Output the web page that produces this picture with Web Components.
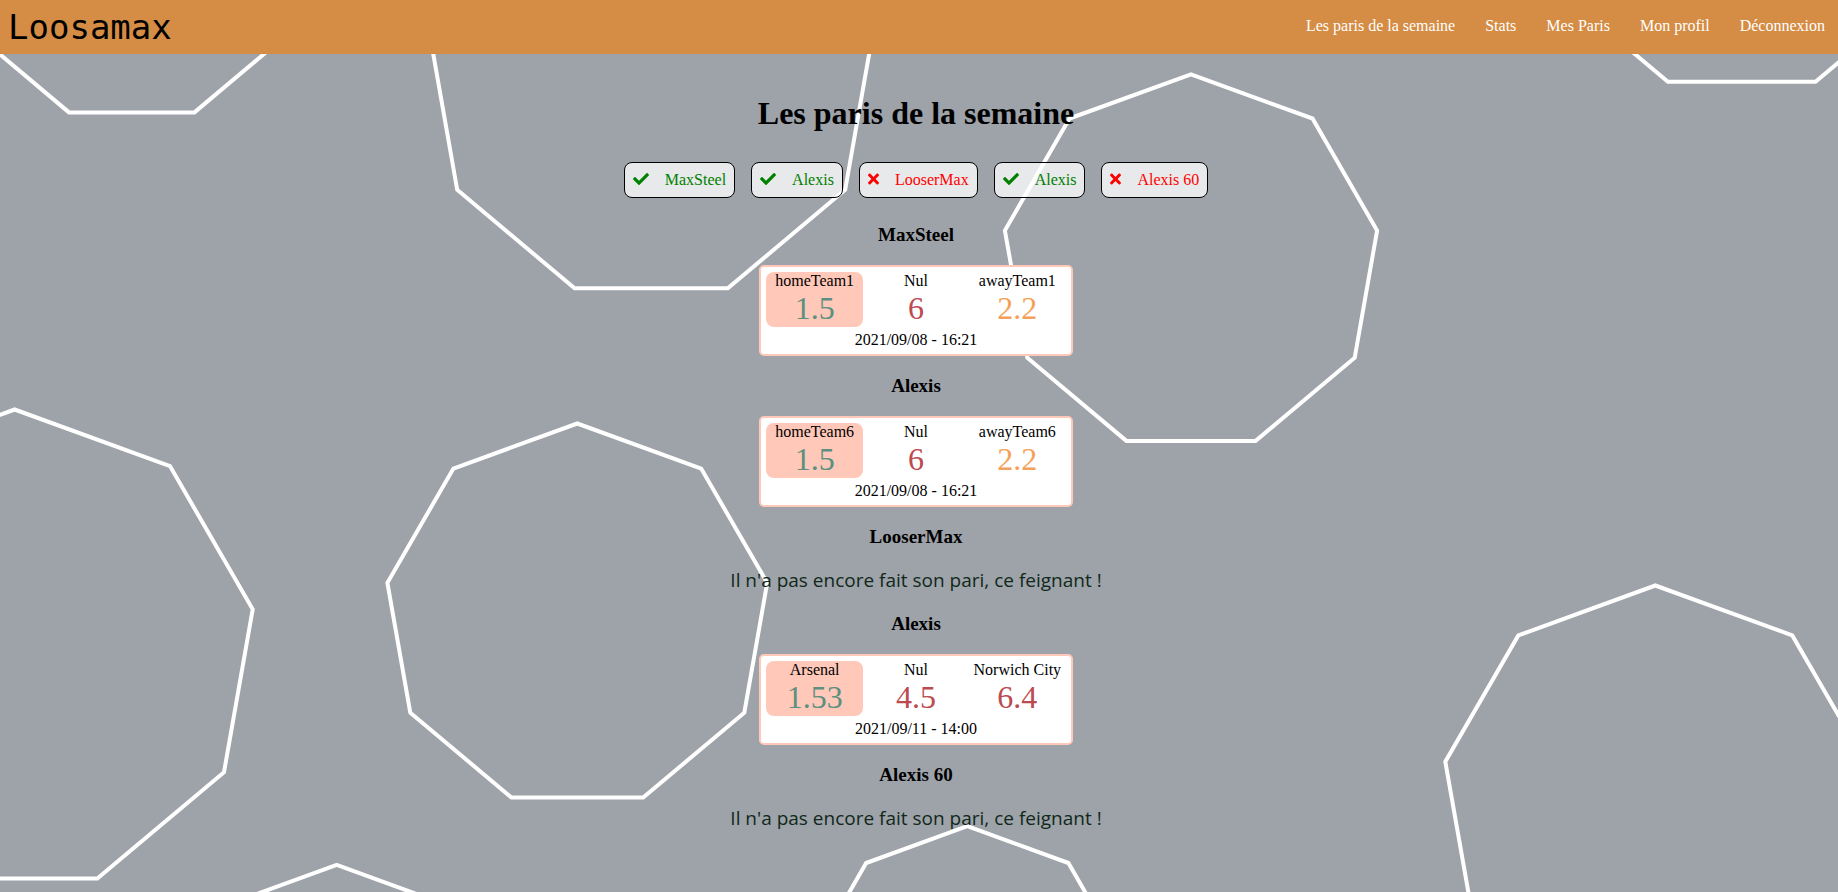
<!DOCTYPE html>
<html lang="fr">
<head>
<meta charset="utf-8">
<meta name="viewport" content="width=device-width, initial-scale=1">
<title>Loosamax</title>
<style>
  body { margin: 0; background: #9ea2a9; color: #000; font: 16px/18px "Liberation Serif", serif; }
</style>
</head>
<body>
<loosa-app></loosa-app>

<template id="app">
  <style>
    :host { display: block; position: relative; min-height: 100vh; overflow: hidden; box-sizing: border-box; }
    loosa-backdrop { position: absolute; inset: 0; }
    .page { position: relative; }
    main { display: flex; flex-direction: column; align-items: center; padding: 41px 6px 32px 0; }
    h1 { margin: 0 0 30px; font-size: 32px; line-height: 37px; text-align: center; }
    .players { display: flex; flex-wrap: wrap; justify-content: center; gap: 16px; margin: 0 0 7px; }
  </style>
  <loosa-backdrop></loosa-backdrop>
  <div class="page">
    <loosa-header>
      <loosa-link>Les paris de la semaine</loosa-link>
      <loosa-link>Stats</loosa-link>
      <loosa-link>Mes Paris</loosa-link>
      <loosa-link>Mon profil</loosa-link>
      <loosa-link>Déconnexion</loosa-link>
    </loosa-header>
    <main>
      <h1>Les paris de la semaine</h1>
      <div class="players">
        <player-chip done>MaxSteel</player-chip>
        <player-chip done>Alexis</player-chip>
        <player-chip>LooserMax</player-chip>
        <player-chip done>Alexis</player-chip>
        <player-chip>Alexis 60</player-chip>
      </div>
      <player-bet name="MaxSteel">
        <bet-card date="2021/09/08 - 16:21">
          <bet-odd label="homeTeam1" value="1.5" level="low" picked></bet-odd>
          <bet-odd label="Nul" value="6" level="high"></bet-odd>
          <bet-odd label="awayTeam1" value="2.2" level="mid"></bet-odd>
        </bet-card>
      </player-bet>
      <player-bet name="Alexis">
        <bet-card date="2021/09/08 - 16:21">
          <bet-odd label="homeTeam6" value="1.5" level="low" picked></bet-odd>
          <bet-odd label="Nul" value="6" level="high"></bet-odd>
          <bet-odd label="awayTeam6" value="2.2" level="mid"></bet-odd>
        </bet-card>
      </player-bet>
      <player-bet name="LooserMax"></player-bet>
      <player-bet name="Alexis">
        <bet-card date="2021/09/11 - 14:00">
          <bet-odd label="Arsenal" value="1.53" level="low" picked></bet-odd>
          <bet-odd label="Nul" value="4.5" level="high"></bet-odd>
          <bet-odd label="Norwich City" value="6.4" level="high"></bet-odd>
        </bet-card>
      </player-bet>
      <player-bet name="Alexis 60"></player-bet>
    </main>
  </div>
</template>

<template id="header">
  <style>
    :host { display: block; background: #d58c44; }
    header { display: flex; flex-wrap: wrap; align-items: center; justify-content: space-between; min-height: 54px; padding: 0 13px 0 8px; box-sizing: border-box; }
    .logo { color: #000; text-decoration: none; font: 34px/40px "DejaVu Sans Mono", monospace; }
    nav { display: flex; flex-wrap: wrap; gap: 30px; padding-bottom: 2px; }
  </style>
  <header>
    <a class="logo" href="#">Loosamax</a>
    <nav><slot></slot></nav>
  </header>
</template>

<template id="link">
  <style>
    :host { display: block; }
    a { color: #fff; text-decoration: none; }
  </style>
  <a href="#"><slot></slot></a>
</template>

<template id="chip">
  <style>
    :host { display: flex; align-items: center; gap: 16px; padding: 8px; border: 1px solid #000; border-radius: 8px; background: rgba(255, 255, 255, .76); color: red; }
    :host([done]) { color: green; }
    svg { display: block; height: 16px; fill: currentColor; margin-bottom: 2px; }
    .yes, :host([done]) .no { display: none; }
    :host([done]) .yes { display: block; }
  </style>
  <svg class="yes" width="16" viewBox="0 0 512 512" aria-hidden="true"><path d="M173.898 439.404l-166.4-166.4c-9.997-9.997-9.997-26.206 0-36.204l36.203-36.204c9.997-9.998 26.207-9.998 36.204 0L192 312.69 432.095 72.596c9.997-9.997 26.207-9.997 36.204 0l36.203 36.204c9.997 9.997 9.997 26.206 0 36.204l-294.4 294.401c-9.998 9.997-26.207 9.997-36.204-.001z"/></svg>
  <svg class="no" width="11" viewBox="0 0 352 512" aria-hidden="true"><path d="M242.72 256l100.07-100.07c12.28-12.28 12.28-32.19 0-44.48l-22.24-22.24c-12.28-12.28-32.19-12.28-44.48 0L176 189.28 75.93 89.21c-12.28-12.28-32.19-12.28-44.48 0L9.21 111.45c-12.28 12.28-12.28 32.19 0 44.48L109.28 256 9.21 356.07c-12.28 12.28-12.28 32.19 0 44.48l22.24 22.24c12.28 12.28 32.2 12.28 44.48 0L176 322.72l100.07 100.07c12.28 12.28 32.2 12.28 44.48 0l22.24-22.24c12.28-12.28 12.28-32.19 0-44.48L242.72 256z"/></svg>
  <span><slot></slot></span>
</template>

<template id="bet">
  <style>
    :host { display: flex; flex-direction: column; align-items: center; }
    h3 { margin: 19px 0; font-size: 19px; line-height: 22px; }
    p { margin: 0; color: #10291a; font: 19px/27px "Open Sans", sans-serif; }
  </style>
  <h3></h3>
  <slot><p>Il n'a pas encore fait son pari, ce feignant !</p></slot>
</template>

<template id="card">
  <style>
    :host { display: flex; flex-direction: column; gap: 4px; width: 314px; max-width: 100%; box-sizing: border-box; padding: 5px; border: 2px solid #ffc8b9; border-radius: 5px; background: #fff; text-align: center; }
    .odds { display: grid; grid-template-columns: repeat(3, 1fr); gap: 4px; }
  </style>
  <div class="odds"><slot></slot></div>
  <time></time>
</template>

<template id="odd">
  <style>
    :host { display: flex; flex-direction: column; border-radius: 8px; }
    :host([picked]) { background: #ffc8b9; }
    .value { font-size: 32px; line-height: 37px; }
    :host([level="low"]) .value { color: #5c9080; }
    :host([level="mid"]) .value { color: #f4a259; }
    :host([level="high"]) .value { color: #bc4b51; }
  </style>
  <span class="label"></span>
  <span class="value"></span>
</template>

<template id="backdrop">
  <style>
    :host { display: block; overflow: hidden; }
    svg { display: block; width: 100%; height: 100%; fill: none; stroke: #fff; stroke-width: 4; }
  </style>
  <svg viewBox="0 0 1838 892" preserveAspectRatio="xMidYMin slice" aria-hidden="true"></svg>
</template>

<script>
  class Base extends HTMLElement {
    constructor(id) {
      super();
      this.attachShadow({ mode: "open" }).append(document.getElementById(id).content.cloneNode(true));
    }
    fill(selector, attribute) {
      this.shadowRoot.querySelector(selector).textContent = this.getAttribute(attribute);
    }
  }

  /* Background of regular nonagons, each given as centre x, centre y, radius. */
  class Backdrop extends Base {
    static shapes = [
      [131.7, -59.8, 183.2], [651.2, 77.8, 224], [1741.7, -121.2, 215.9],
      [1191, 263.3, 189], [14.6, 651.3, 241.8], [577.3, 616.3, 192.8],
      [1655.3, 798.7, 213.2], [967.3, 983.5, 157.3], [336.7, 1034.9, 170]
    ];
    constructor() {
      super("backdrop");
      const svg = this.shadowRoot.querySelector("svg");
      for (const [x, y, r] of Backdrop.shapes) {
        const shape = document.createElementNS("http://www.w3.org/2000/svg", "polygon");
        const points = Array.from({ length: 9 }, (_, i) => {
          const a = (i * 40 - 90) * Math.PI / 180;
          return (x + r * Math.cos(a)).toFixed(1) + "," + (y + r * Math.sin(a)).toFixed(1);
        });
        shape.setAttribute("points", points.join(" "));
        svg.append(shape);
      }
    }
  }
  class Header extends Base { constructor() { super("header"); } }
  class NavLink extends Base { constructor() { super("link"); } }
  class PlayerChip extends Base { constructor() { super("chip"); } }
  class PlayerBet extends Base {
    constructor() { super("bet"); }
    connectedCallback() { this.fill("h3", "name"); }
  }
  class BetCard extends Base {
    constructor() { super("card"); }
    connectedCallback() { this.fill("time", "date"); }
  }
  class BetOdd extends Base {
    constructor() { super("odd"); }
    connectedCallback() { this.fill(".label", "label"); this.fill(".value", "value"); }
  }
  class App extends Base { constructor() { super("app"); } }

  customElements.define("loosa-backdrop", Backdrop);
  customElements.define("loosa-header", Header);
  customElements.define("loosa-link", NavLink);
  customElements.define("player-chip", PlayerChip);
  customElements.define("player-bet", PlayerBet);
  customElements.define("bet-card", BetCard);
  customElements.define("bet-odd", BetOdd);
  customElements.define("loosa-app", App);
</script>
</body>
</html>
